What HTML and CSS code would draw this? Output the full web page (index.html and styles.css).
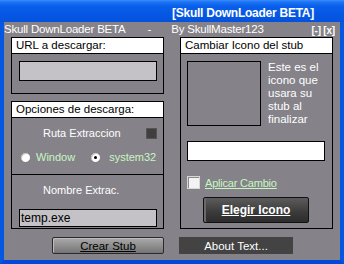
FILE: index.html
```html
<!DOCTYPE html>
<html>
<head>
<meta charset="utf-8">
<link rel="stylesheet" href="styles.css">
</head>
<body>
<div class="window">
  <div class="titlebar"><span class="title">[Skull DownLoader BETA]</span></div>
  <div class="client">
    <div class="toprow">
      <span class="app">Skull DownLoader BETA</span>
      <span class="dash">-</span>
      <span class="by">By SkullMaster123</span>
      <span class="ctrl">[-] [x]</span>
    </div>
    <div class="cols">
      <div class="leftcol">
        <div class="frame f1">
          <div class="fhead">URL a descargar:</div>
          <div class="field grey url"></div>
        </div>
        <div class="frame f2">
          <div class="fhead">Opciones de descarga:</div>
          <div class="ruta">
            <span class="label">Ruta Extraccion</span>
            <span class="square"></span>
          </div>
          <div class="radios">
            <span class="radio"></span><span class="green rw">Window</span>
            <span class="radio checked"></span><span class="green rs">system32</span>
          </div>
          <div class="divider"></div>
          <div class="nombre label">Nombre Extrac.</div>
          <div class="field grey name">temp.exe</div>
        </div>
      </div>
      <div class="frame right">
        <div class="fhead">Cambiar Icono del stub</div>
        <div class="iconrow">
          <div class="iconbox"></div>
          <div class="desc">Este es el<br>icono que<br>usara su<br>stub al<br>finalizar</div>
        </div>
        <div class="field white path"></div>
        <div class="check">
          <span class="box"></span><span class="green link">Aplicar Cambio</span>
        </div>
        <div class="elegir"><span>Elegir Icono</span></div>
      </div>
    </div>
    <div class="bottom">
      <div class="crear"><span>Crear Stub</span></div>
      <div class="about">About Text...</div>
    </div>
  </div>
</div>
</body>
</html>
```
FILE: styles.css
```css
html, body {
  margin: 0;
  padding: 0;
}
body {
  font-family: "Liberation Sans", Arial, sans-serif;
  font-size: 11px;
}
.window {
  width: 344px;
  height: 264px;
  box-sizing: border-box;
  background: #0a5ce4;
  border-left: 4px solid #0556e0;
  border-right: 4px solid #0556e0;
  border-bottom: 4px solid #0548d8;
  display: flex;
  flex-direction: column;
}
.titlebar {
  height: 22px;
  margin: 0 -4px;
  background: linear-gradient(#3b8dff 0, #1d74f6 2px, #0a60ea 6px, #0657e4 14px, #0553dc 22px);
  display: flex;
  align-items: center;
  justify-content: flex-end;
  padding-right: 30px;
  padding-top: 3px;
  box-sizing: border-box;
}
.title {
  color: #fff;
  font-family: "Liberation Sans", Arial, sans-serif;
  font-weight: bold;
  font-size: 12px;
  letter-spacing: -0.25px;
  line-height: 14px;
}
.client {
  flex: 1;
  background: #858389;
  display: flex;
  flex-direction: column;
  color: #fff;
}
.toprow {
  height: 15px;
  display: flex;
  align-items: flex-start;
  line-height: 14px;
  font-size: 11.5px;
  letter-spacing: -0.2px;
  white-space: nowrap;
}
.app { margin-left: 0; }
.dash { margin-left: 22px; }
.by { margin-left: 20px; }
.ctrl {
  margin-left: auto;
  margin-right: 5px;
  margin-top: 3px;
  font-weight: bold;
  font-size: 10px;
  letter-spacing: -0.2px;
  line-height: 12px;
}
.cols {
  display: flex;
  gap: 16px;
  padding-left: 7px;
}
.leftcol {
  width: 153px;
  display: flex;
  flex-direction: column;
  gap: 7px;
}
.frame {
  border: 1px solid #000;
  box-sizing: border-box;
  display: flex;
  flex-direction: column;
}
.fhead {
  background: #fff;
  color: #000;
  height: 16px;
  border-bottom: 1px solid #000;
  box-sizing: border-box;
  padding-left: 4px;
  line-height: 15px;
  font-size: 11.5px;
}
.f1 { height: 57px; }
.f2 { height: 128px; }
.right { width: 153px; height: 192px; }
.field {
  border: 1px solid #000;
  box-sizing: border-box;
  width: 138px;
  margin-left: 7px;
}
.grey { background: #c4c2c6; }
.white { background: #fff; }
.url { height: 20px; margin-top: 7px; }
.ruta {
  display: flex;
  align-items: center;
  margin-top: 8px;
  padding-left: 31px;
  height: 14px;
}
.label { color: #fff; }
.square {
  width: 9px;
  height: 9px;
  background: #3f3f3f;
  border: 1px solid #555;
  margin-left: auto;
  margin-right: 6px;
}
.radios {
  display: flex;
  align-items: center;
  margin-top: 10px;
  height: 14px;
  padding-left: 8px;
}
.radio {
  width: 11px;
  height: 11px;
  box-sizing: border-box;
  border-radius: 50%;
  background: #fff;
  border: 1px solid #7a7a7a;
  box-shadow: inset 1px 1px 0 #c8c8c8;
  position: relative;
}
.radio.checked { margin-left: 15px; }
.radio.checked::after {
  content: "";
  position: absolute;
  left: 3px;
  top: 3px;
  width: 3px;
  height: 3px;
  border-radius: 50%;
  background: #000;
}
.green { color: #c6f7c0; }
.rw { margin-left: 5px; }
.rs { margin-left: 8px; }
.divider {
  height: 1px;
  background: #000;
  margin-top: 10px;
}
.nombre {
  margin-top: 8px;
  padding-left: 31px;
  line-height: 14px;
}
.name {
  height: 18px;
  margin-top: 12px;
  color: #000;
  padding-left: 1px;
  line-height: 16px;
  font-size: 12px;
}
.iconrow {
  display: flex;
  margin-top: 7px;
}
.iconbox {
  width: 74px;
  height: 65px;
  border: 1px solid #000;
  box-sizing: border-box;
  margin-left: 6px;
}
.desc {
  margin-left: 7px;
  margin-top: 0;
  line-height: 13px;
  font-size: 11.5px;
}
.path {
  height: 20px;
  margin-top: 15px;
  margin-left: 6px;
}
.check {
  display: flex;
  align-items: center;
  margin-top: 15px;
  margin-left: 6px;
  height: 13px;
}
.box {
  width: 13px;
  height: 13px;
  box-sizing: border-box;
  background: #f3f3f3;
  border: 1px solid #d8d8d8;
  box-shadow: inset 1px 1px 0 #8a8a8a;
}
.link { text-decoration: underline; margin-left: 5px; letter-spacing: -0.2px; }
.elegir {
  width: 106px;
  height: 26px;
  margin-top: 8px;
  margin-left: 22px;
  box-sizing: border-box;
  border: 1px solid #111;
  border-radius: 2px;
  background: linear-gradient(#5c5c5c, #3a3a3a 60%, #2c2c2c);
  box-shadow: inset 2px 0 0 #6a6a6a;
  display: flex;
  align-items: center;
  justify-content: center;
  color: #fff;
  font-weight: bold;
  font-size: 12px;
  text-decoration: underline;
}
.bottom {
  display: flex;
  gap: 15px;
  margin-top: 8px;
  padding-left: 48px;
}
.crear {
  width: 112px;
  height: 17px;
  box-sizing: border-box;
  border: 1px solid #2a2a2a;
  border-radius: 2px;
  background: linear-gradient(#a9a9a9, #8d8d8d 55%, #747474);
  box-shadow: inset 1px 1px 0 #bdbdbd;
  display: flex;
  align-items: center;
  justify-content: center;
  color: #000;
  text-decoration: underline;
  font-size: 11.5px;
}
.about {
  width: 114px;
  height: 17px;
  background: #434343;
  color: #fff;
  display: flex;
  align-items: center;
  justify-content: center;
  font-size: 11.5px;
}
```
